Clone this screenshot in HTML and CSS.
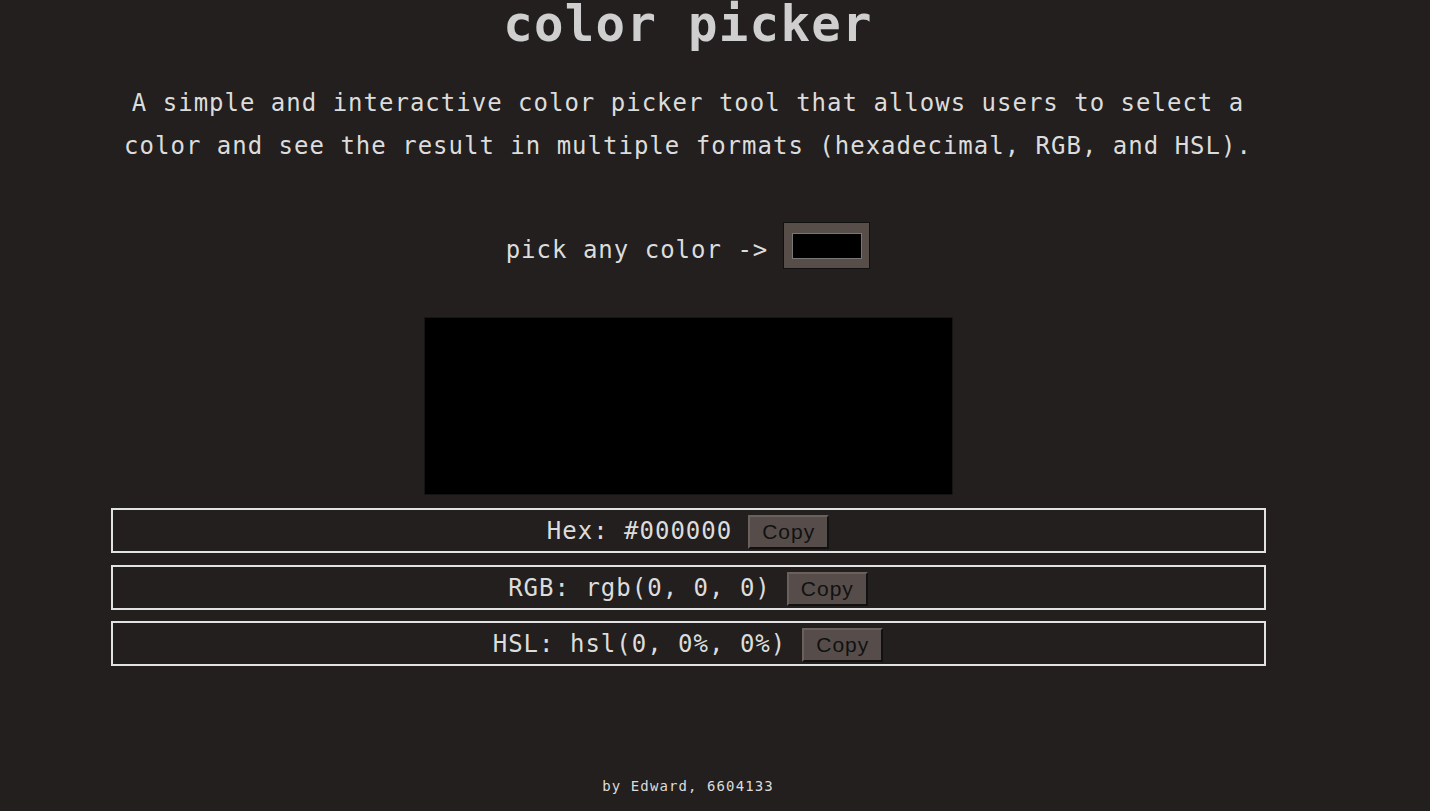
FILE: index.html
```html
<!DOCTYPE html>
<html lang="en">
<head>
<meta charset="utf-8">
<title>color picker</title>
<link rel="stylesheet" href="styles.css">
</head>
<body>
<main class="page">
  <h1 class="title">color picker</h1>
  <p class="desc">A simple and interactive color picker tool that allows users to select a color and see the result in multiple formats (hexadecimal, RGB, and HSL).</p>
  <div class="pick">
    <span class="pick-label">pick any color -&gt;</span>
    <div class="color-input"><div class="color-input-swatch"></div></div>
  </div>
  <div class="preview"></div>
  <div class="rows">
    <div class="row"><span class="row-text">Hex: #000000</span><button class="copy">Copy</button></div>
    <div class="row"><span class="row-text">RGB: rgb(0, 0, 0)</span><button class="copy">Copy</button></div>
    <div class="row"><span class="row-text">HSL: hsl(0, 0%, 0%)</span><button class="copy">Copy</button></div>
  </div>
  <footer class="footer">by Edward, 6604133</footer>
</main>
</body>
</html>
```
FILE: styles.css
```css
html, body {
  margin: 0;
  padding: 0;
  background: #221f1e;
}
body {
  color: #dcdcdc;
  font-family: "DejaVu Sans Mono", "Liberation Mono", monospace;
  letter-spacing: 1px;
}
.page {
  width: 1376px;
  display: flex;
  flex-direction: column;
  align-items: center;
  text-align: center;
}
.title {
  margin: 0;
  font-size: 49px;
  line-height: 50px;
  font-weight: bold;
  color: #cfcfcf;
  letter-spacing: 1.3px;
}
.desc {
  margin: 32px 0 0;
  max-width: 1160px;
  font-size: 24px;
  line-height: 43px;
}
.pick {
  margin-top: 54px;
  display: flex;
  align-items: center;
  gap: 15px;
}
.pick-label {
  font-size: 24px;
  line-height: 30px;
  padding-top: 8px;
}
.color-input {
  border: 1px solid #111;
  background: #574e4a;
  padding: 10px 7px 9px 8px;
}
.color-input-swatch {
  box-sizing: border-box;
  width: 70px;
  height: 26px;
  background: #000;
  border: 1px solid #777;
}
.preview {
  margin-top: 48px;
  box-sizing: border-box;
  width: 529px;
  height: 178px;
  background: #000;
  border: 1px solid #161414;
}
.rows {
  margin-top: 13px;
  display: flex;
  flex-direction: column;
  gap: 12px;
}
.row {
  box-sizing: border-box;
  width: 1155px;
  height: 45px;
  border: 2px solid #e2e2e2;
  display: flex;
  justify-content: center;
  align-items: center;
  gap: 16px;
}
.row:last-child {
  margin-top: -1px;
}
.row-text {
  font-size: 24px;
  line-height: 30px;
}
.copy {
  font-family: "Liberation Sans", Arial, sans-serif;
  font-size: 21px;
  letter-spacing: 1px;
  line-height: 24px;
  padding: 3px 12px;
  margin-top: 3px;
  color: #111;
  background: #564d4a;
  border: 2px solid;
  border-color: #6a615d #111 #111 #6a615d;
}
.footer {
  margin-top: 110px;
  font-size: 14px;
  line-height: 20px;
  letter-spacing: 1.1px;
}
```
